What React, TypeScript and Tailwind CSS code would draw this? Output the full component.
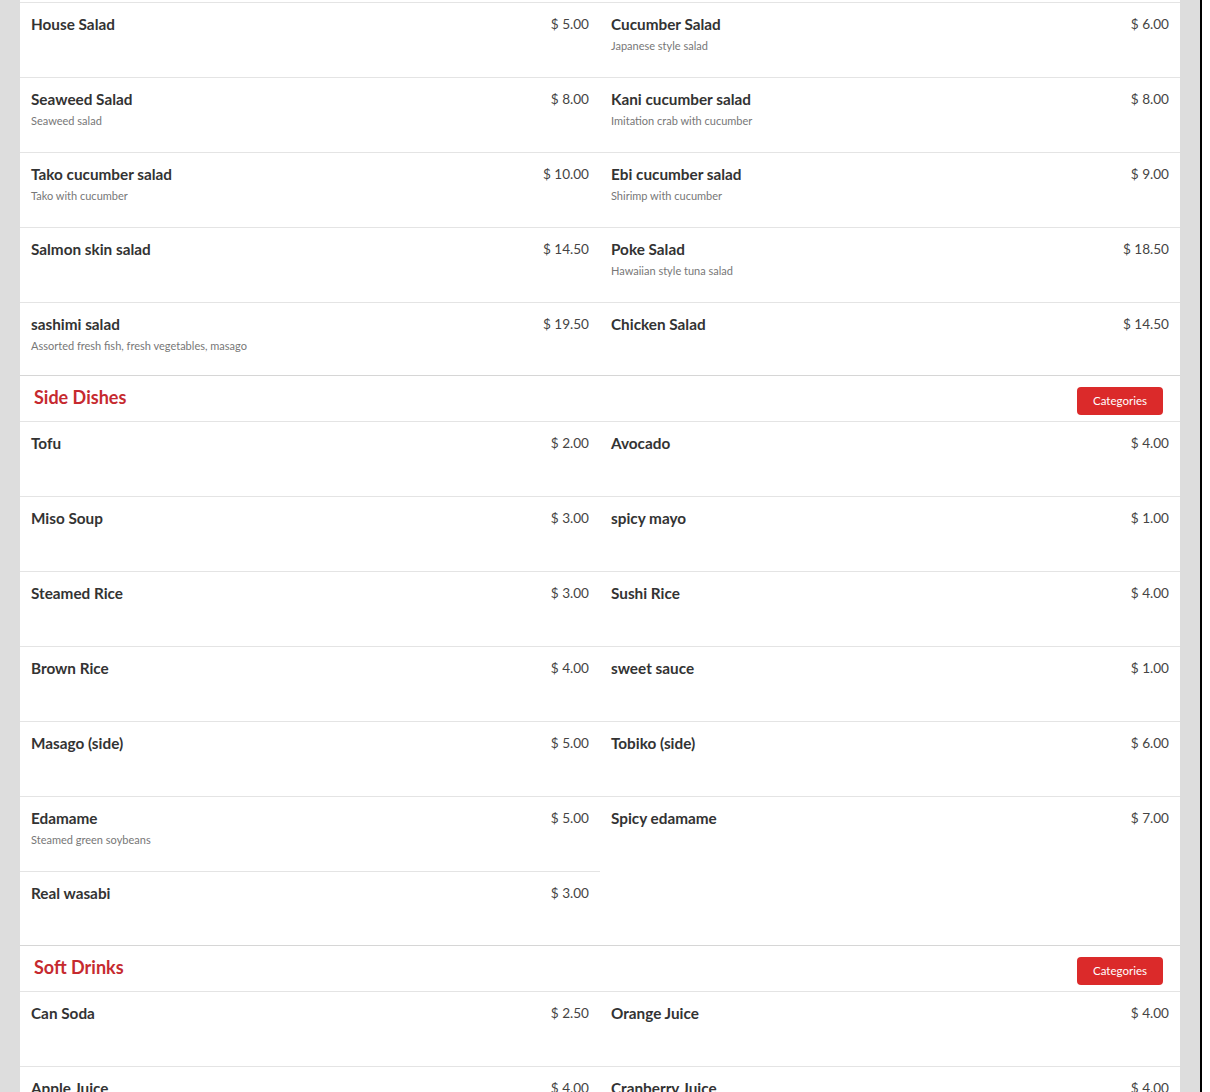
import React from 'react';

interface MenuItem {
  name: string;
  price: string;
  description?: string;
}

interface Section {
  title?: string;
  items: MenuItem[];
}

const sections: Section[] = [
  {
    items: [
      { name: 'House Salad', price: '5.00' },
      { name: 'Cucumber Salad', price: '6.00', description: 'Japanese style salad' },
      { name: 'Seaweed Salad', price: '8.00', description: 'Seaweed salad' },
      { name: 'Kani cucumber salad', price: '8.00', description: 'Imitation crab with cucumber' },
      { name: 'Tako cucumber salad', price: '10.00', description: 'Tako with cucumber' },
      { name: 'Ebi cucumber salad', price: '9.00', description: 'Shirimp with cucumber' },
      { name: 'Salmon skin salad', price: '14.50' },
      { name: 'Poke Salad', price: '18.50', description: 'Hawaiian style tuna salad' },
      { name: 'sashimi salad', price: '19.50', description: 'Assorted fresh fish, fresh vegetables, masago' },
      { name: 'Chicken Salad', price: '14.50' },
    ],
  },
  {
    title: 'Side Dishes',
    items: [
      { name: 'Tofu', price: '2.00' },
      { name: 'Avocado', price: '4.00' },
      { name: 'Miso Soup', price: '3.00' },
      { name: 'spicy mayo', price: '1.00' },
      { name: 'Steamed Rice', price: '3.00' },
      { name: 'Sushi Rice', price: '4.00' },
      { name: 'Brown Rice', price: '4.00' },
      { name: 'sweet sauce', price: '1.00' },
      { name: 'Masago (side)', price: '5.00' },
      { name: 'Tobiko (side)', price: '6.00' },
      { name: 'Edamame', price: '5.00', description: 'Steamed green soybeans' },
      { name: 'Spicy edamame', price: '7.00' },
      { name: 'Real wasabi', price: '3.00' },
    ],
  },
  {
    title: 'Soft Drinks',
    items: [
      { name: 'Can Soda', price: '2.50' },
      { name: 'Orange Juice', price: '4.00' },
      { name: 'Apple Juice', price: '4.00' },
      { name: 'Cranberry Juice', price: '4.00' },
    ],
  },
];

function ItemRow({ item }: { item: MenuItem }) {
  return (
    <div className="h-[75px] border-t border-[#e4e4e4] px-[11px] pt-[11px] flex justify-between">
      <div>
        <div className="text-[15.3px] leading-[20px] font-bold text-[#333]">{item.name}</div>
        {item.description && (
          <div className="mt-[4px] text-[11px] leading-[16px] text-[#777]">{item.description}</div>
        )}
      </div>
      <div className="text-[13.6px] leading-[20px] text-[#444]">$ {item.price}</div>
    </div>
  );
}

export default function App() {
  return (
    <div className="min-h-screen bg-white" style={{ fontFamily: 'Lato, "Open Sans", sans-serif' }}>
      <div className="w-[1202px] min-h-[1092px] bg-[#dddddd] border-r-2 border-black pl-[20px] pr-[20px]">
        <div className="bg-white pt-[2px] min-h-[1092px]">
          {sections.map((section, i) => (
            <div key={i}>
              {section.title && (
                <div
                  className={
                    i === 1
                      ? '-mt-[2px] h-[46px] border-t border-[#d6d6d6] flex items-center justify-between pl-[14px] pr-[17px]'
                      : '-mt-px h-[46px] border-t border-[#d6d6d6] flex items-center justify-between pl-[14px] pr-[17px]'
                  }
                >
                  <h2 className="text-[18px] font-bold text-[#c62a2f] -mt-[3px]">{section.title}</h2>
                  <button className="mt-[5px] h-[28px] w-[86px] rounded-[4px] bg-[#db2a2a] text-white text-[11.5px]">
                    Categories
                  </button>
                </div>
              )}
              <div className="grid grid-cols-2">
                {section.items.map((item) => (
                  <ItemRow key={item.name} item={item} />
                ))}
              </div>
            </div>
          ))}
        </div>
      </div>
    </div>
  );
}
